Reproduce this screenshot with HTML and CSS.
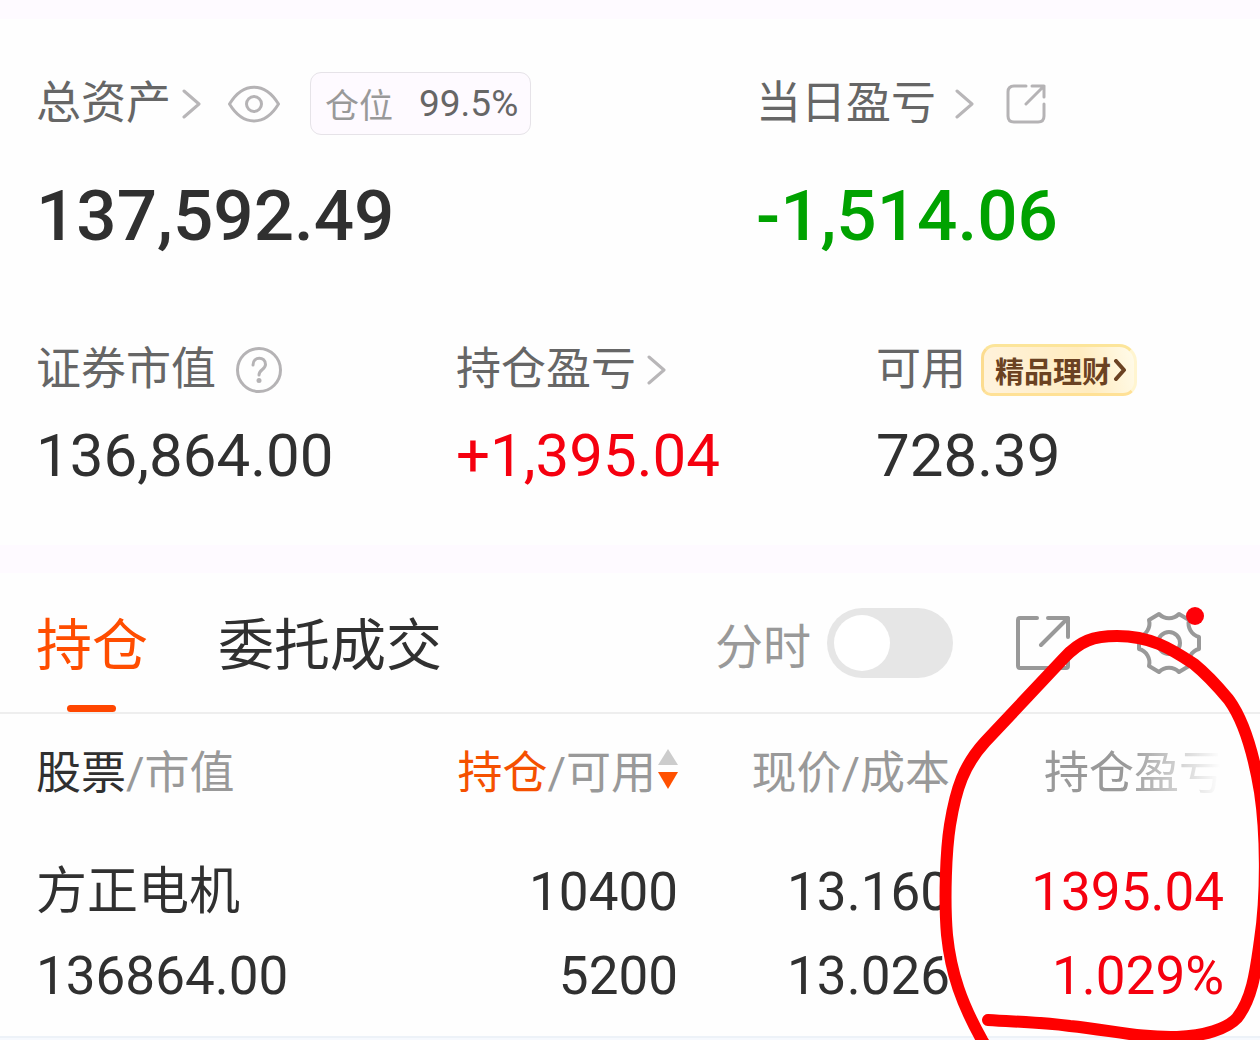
FILE: index.html
```html
<!DOCTYPE html>
<html lang="zh-CN">
<head>
<meta charset="utf-8">
<meta name="viewport" content="width=device-width, initial-scale=1">
<title>持仓</title>
<link rel="stylesheet" href="styles.css">
</head>
<body>
<main class="page">
  <section class="summary">
    <div class="totals">
      <div class="cell">
        <div class="label-row">
          <a class="label" href="#assets">总资产<svg class="chevron" width="20" height="32" viewBox="0 0 20 32"><path d="M3 3 L18 16 L3 29"/></svg></a>
          <button class="icon-button eye" type="button" aria-label="隐藏金额"><svg width="54" height="38" viewBox="0 0 54 38"><path d="M2.500 19 C16 -3.500 38 -3.500 51.500 19 C38 41.500 16 41.500 2.500 19 Z"/><circle cx="27" cy="19" r="7.500"/></svg></button>
          <span class="chip"><span class="chip-name">仓位</span><span>99.5%</span></span>
        </div>
        <div class="value value-large">137,592.49</div>
      </div>
      <div class="cell">
        <div class="label-row">
          <a class="label label-wide" href="#today">当日盈亏<svg class="chevron" width="20" height="32" viewBox="0 0 20 32"><path d="M3 3 L18 16 L3 29"/></svg></a>
          <button class="icon-button share" type="button" aria-label="分享当日盈亏"><svg width="40" height="40" viewBox="0 0 40 40"><path d="M20 2 H8 Q2 2 2 8 V32 Q2 38 8 38 H32 Q38 38 38 32 V20 M26 2 H38 V13 M38 2 L20 20"/></svg></button>
        </div>
        <div class="value value-large down">-1,514.06</div>
      </div>
    </div>
    <div class="details">
      <div class="cell">
        <div class="label-row label-row-small">
          <span class="label">证券市值</span>
          <button class="icon-button help" type="button" aria-label="说明"><svg width="46" height="46" viewBox="0 0 46 46"><circle cx="23" cy="23" r="21.500"/><path d="M17 18 C17 9 29.500 9 29.500 17.500 C29.500 22.500 23 22.500 23 28"/><circle class="dot" cx="23" cy="33.500" r="2.500"/></svg></button>
        </div>
        <div class="value">136,864.00</div>
      </div>
      <div class="cell">
        <div class="label-row label-row-small">
          <a class="label" href="#profit">持仓盈亏<svg class="chevron" width="20" height="32" viewBox="0 0 20 32"><path d="M3 3 L18 16 L3 29"/></svg></a>
        </div>
        <div class="value up">+1,395.04</div>
      </div>
      <div class="cell">
        <div class="label-row label-row-small">
          <span class="label">可用</span>
          <a class="promo" href="#finance">精品理财<svg width="14" height="22" viewBox="0 0 14 22"><path d="M3 2 L11 11 L3 20"/></svg></a>
        </div>
        <div class="value">728.39</div>
      </div>
    </div>
  </section>

  <section class="holdings">
    <div class="toolbar">
      <nav class="tabs">
        <a class="tab tab-active" href="#holdings">持仓</a>
        <a class="tab" href="#orders">委托成交</a>
      </nav>
      <div class="tools">
        <label class="switch-label" for="intraday">分时</label>
        <input class="switch" type="checkbox" id="intraday">
        <button class="icon-button export" type="button" aria-label="分享持仓"><svg width="54" height="54" viewBox="0 0 54 54"><path d="M21 2 H4 Q2 2 2 4 V50 Q2 52 4 52 H50 Q52 52 52 50 V33 M32 2 H52 V21 M52 2 L25 29"/></svg></button>
        <button class="icon-button settings" type="button" aria-label="设置"><svg width="64" height="64" viewBox="-32 -32 64 64"><path d="M30 -6 V6 A14 14 0 0 0 20 23 L10 29 A14 14 0 0 0 -10 29 L-20 23 A14 14 0 0 0 -30 6 V-6 A14 14 0 0 0 -20 -23 L-10 -29 A14 14 0 0 0 10 -29 L20 -23 A14 14 0 0 0 30 -6 Z"/><circle r="11"/></svg><span class="badge"></span></button>
      </div>
    </div>
    <table class="positions">
      <thead>
        <tr>
          <th class="col-name" scope="col"><span class="strong">股票</span>/市值</th>
          <th class="col-amount" scope="col"><button class="sort" type="button"><span><span class="accent">持仓</span>/可用</span><svg width="20" height="40" viewBox="0 0 20 40"><path class="sort-up" d="M10 0 L20 16 H0 Z"/><path class="sort-down" d="M0 23 H20 L10 40 Z"/></svg></button></th>
          <th class="col-price" scope="col">现价/成本</th>
          <th class="col-profit" scope="col"><span class="fade">持仓盈亏</span></th>
        </tr>
      </thead>
      <tbody>
        <tr>
          <td><div class="stock">方正电机</div><div>136864.00</div></td>
          <td><div>10400</div><div>5200</div></td>
          <td><div>13.160</div><div>13.026</div></td>
          <td class="up"><div>1395.04</div><div>1.029%</div></td>
        </tr>
      </tbody>
    </table>
  </section>

  <svg class="marker" width="330" height="440" viewBox="930 620 330 440" aria-hidden="true"><path d="M994 1060 L982 1040 C962 1004 951 974 947 935 C944 900 946 850 950 825 C956 788 964 765 985 742 L1064 658 C1080 641 1093 636 1117 636 C1150 636 1170 648 1194 664 C1210 677 1219 688 1229 700 C1247 725 1255 762 1260 792 C1266 832 1267 893 1260 940 C1256 968 1253 998 1237 1018 C1227 1029 1204 1036 1177 1037 C1140 1038 1110 1030 1070 1026 C1040 1022 1018 1022 988 1020"/></svg>
</main>
</body>
</html>
```
FILE: styles.css
```css
* { box-sizing: border-box; }

body {
  margin: 0;
  background: #f6f9fe;
  color: #303030;
  font-family: Roboto, "Noto Sans CJK SC", sans-serif;
}

a { color: inherit; text-decoration: none; }

button {
  padding: 0;
  border: 0;
  background: none;
  font: inherit;
  color: inherit;
}

svg { display: block; fill: none; stroke-linecap: round; stroke-linejoin: round; }

.page {
  position: relative;
  min-height: 100vh;
  overflow: hidden;
}

.summary {
  padding: 53px 0;
  border-top: 19px solid #fefaff;
  background: #fefefe;
}

.totals { display: grid; grid-template-columns: 4fr 3fr; margin-bottom: 86px; }
.details { display: grid; grid-template-columns: repeat(3, 1fr); }
.cell { padding-left: 36px; }

.label-row { display: flex; align-items: center; height: 63px; margin-bottom: 39px; }
.label-row-small { height: 52px; margin-bottom: 24px; }

.label {
  display: flex;
  align-items: center;
  gap: 10px;
  color: #666;
  font-size: 45px;
  line-height: 52px;
}
.label-wide { gap: 18px; }
.chevron { stroke: #b8b6b8; stroke-width: 3; }

.icon-button { stroke: #b5b3b5; stroke-width: 4; }
.eye { margin-left: 26px; stroke-width: 3; }
.share { margin-left: 32px; stroke-width: 3; }
.help { margin-left: 20px; stroke-width: 3; }
.dot { fill: #b5b3b5; stroke: none; }

.chip {
  display: flex;
  align-items: center;
  gap: 26px;
  height: 63px;
  margin-left: 29px;
  padding: 0 12px 0 14px;
  border: 1px solid #e6e3e8;
  border-radius: 11px;
  background: #fefaff;
  color: #666;
  font-size: 37px;
}
.chip-name { color: #999; font-size: 34px; }

.value { font-size: 60px; line-height: 72px; }
.value-large { font-size: 71px; font-weight: 500; line-height: 84px; }
.up { color: #f5000f; }
.down { color: #00a200; }

.promo {
  display: flex;
  align-items: center;
  gap: 2px;
  height: 52px;
  margin-left: 15px;
  padding: 0 7px 0 11px;
  border: 3px solid;
  border-color: #fce59a #fff5d0 #ffe196 #fcdc90;
  border-radius: 14px 18px 14px 10px;
  background: linear-gradient(75deg, #fff3de, #ffecc0 65%, #fffbea);
  color: #6b4222;
  font-size: 29px;
  font-weight: 700;
  stroke: #6b4222;
  stroke-width: 4;
}

.holdings { border-top: 28px solid #fefaff; background: #fefefe; }

.toolbar {
  display: flex;
  justify-content: space-between;
  height: 141px;
  padding: 0 59px 0 36px;
  border-bottom: 2px solid #eee;
}
.tabs { display: flex; gap: 70px; }
.tab { position: relative; padding-top: 8px; font-size: 56px; line-height: 131px; }
.tab-active { color: #ff4d00; }
.tab-active::after {
  content: "";
  position: absolute;
  bottom: 0;
  left: 50%;
  width: 49px;
  height: 7px;
  margin-left: -25px;
  border-radius: 4px;
  background: #ff4600;
}

.tools { display: flex; align-items: center; }
.switch-label { margin-right: 16px; color: #999; font-size: 48px; }

.switch {
  appearance: none;
  width: 126px;
  height: 70px;
  margin: 0;
  padding: 7px;
  border-radius: 35px;
  background: #e6e6e6;
}
.switch::before {
  content: "";
  display: block;
  width: 56px;
  height: 56px;
  border-radius: 50%;
  background: #fff;
}
.switch:checked::before { margin-left: auto; }

.export { margin-left: 63px; stroke: #999; }
.settings { position: relative; margin-left: 67px; stroke: #999; }
.badge {
  position: absolute;
  top: -4px;
  right: -3px;
  width: 18px;
  height: 18px;
  border-radius: 50%;
  background: #ff0008;
}

.positions {
  width: 100%;
  border-collapse: collapse;
  border-bottom: 2px solid #edf2f8;
  table-layout: fixed;
}
.positions th {
  height: 118px;
  padding: 0 0 8px;
  color: #999;
  font-size: 45px;
  font-weight: 400;
  text-align: right;
  white-space: nowrap;
}
.positions td {
  padding: 18px 0;
  font-size: 53px;
  line-height: 84px;
  text-align: right;
}
.positions th:first-child,
.positions td:first-child { padding-left: 36px; text-align: left; }
.positions th:last-child,
.positions td:last-child { padding-right: 36px; }

.col-amount { width: 300px; }
.col-price { width: 272px; }
.col-profit { width: 310px; }

.stock { font-size: 51px; }
.strong { color: #303030; }
.accent { color: #f55000; }
.sort { display: inline-flex; align-items: center; gap: 2px; }
.sort-up { fill: #ccc; }
.sort-down { fill: #ff5000; }
.fade {
  -webkit-mask-image: linear-gradient(90deg, #000 45%, transparent 98%);
  mask-image: linear-gradient(90deg, #000 45%, transparent 98%);
}

.marker {
  position: absolute;
  top: 620px;
  right: 0;
  stroke: #f00;
  stroke-width: 12;
  pointer-events: none;
}
```
